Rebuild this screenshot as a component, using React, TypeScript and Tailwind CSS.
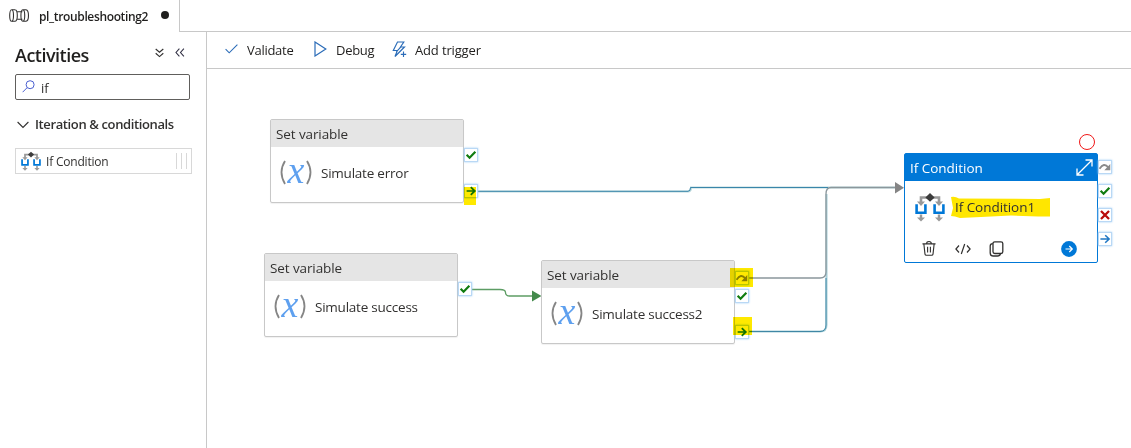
import React from "react";

type PortKind = "check" | "arrow" | "blueArrow" | "skip" | "fail";

function IfIcon({ size }: { size: number }) {
  return (
    <svg width={size} height={size} viewBox="0 0 30 30" className="shrink-0" fill="none">
      <path d="M6 12V5.5H24V12" stroke="#999" strokeWidth="2.6" />
      <path d="M2 9.5h8L6 14zM20 9.5h8L24 14z" fill="#999" />
      <path d="M15 1l4.6 4.4L15 9.8l-4.6-4.4z" fill="#3c3c3c" />
      <path d="M1.6 12.2v8.6h8.800v-8.600M19.600 12.2v8.600h8.800v-8.600" stroke="#0078d7" strokeWidth="2.6" />
      <path d="M6 22.500V27M24 22.500V27" stroke="#999" strokeWidth="2.4" />
      <path d="M2 25.400h8L6 29.600zM20 25.400h8L24 29.600z" fill="#999" />
    </svg>
  );
}

function VariableIcon() {
  return (
    <span className="relative flex h-7 w-[34px] shrink-0 items-center justify-center">
      <svg className="absolute inset-0" width="34" height="28" viewBox="0 0 34 28" fill="none">
        <path d="M6 2Q-1 13 6 25M28 2Q35 13 28 25" stroke="#858585" strokeWidth="1.8" />
      </svg>
      <span className="-mt-[6px] block font-['Liberation_Serif',serif] text-[38px] leading-[44px] tracking-normal text-[#5ea0ef] italic">x</span>
    </span>
  );
}

function Port({ kind, className }: { kind: PortKind; className: string }) {
  return (
    <div className={`absolute size-[14px] border border-[#b9d8f5] bg-white shadow-[0_0_2px_#9fccf5] ${className}`}>
      <svg width="12" height="12" viewBox="0 0 11 11" fill="none" className="block">
        {kind === "check" && <path d="M1.5 5.3L4.2 8L9.5 2.5" stroke="#107c10" strokeWidth="2" />}
        {kind === "arrow" && <path d="M1.5 5.5H9M5.3 2L9 5.5L5.3 9" stroke="#107c10" strokeWidth="1.6" />}
        {kind === "blueArrow" && <path d="M1.3 5.5H9.3M5.7 2L9.3 5.5L5.7 9" stroke="#1f77c4" strokeWidth="1.4" />}
        {kind === "skip" && (
          <>
            <path d="M.5 7.2Q4.3 .8 8.7 6" stroke="#8a8a8a" strokeWidth="1.7" />
            <path d="M10.3 2.8V8.5H4.9z" fill="#8a8a8a" />
          </>
        )}
        {kind === "fail" && <path d="M1.8 1.8L9.2 9.2M9.2 1.8L1.8 9.2" stroke="#b80c0c" strokeWidth="2.1" />}
      </svg>
    </div>
  );
}

function VariableNode({ name, className }: { name: string; className: string }) {
  return (
    <div className={`absolute flex h-[84px] w-[194px] flex-col rounded-[2px] border border-[#c8c8c8] bg-white shadow-[0_1px_1px_rgba(0,0,0,0.06)] ${className}`}>
      <div className="flex h-[27px] shrink-0 items-center bg-[#e5e5e5] px-[5px] pt-[2px] text-[13.5px] tracking-[-0.1px] text-[#323130]">Set variable</div>
      <div className="flex h-[52px] items-center pl-[8px] text-[13.5px] tracking-[-0.23px] text-[#323130]">
        <VariableIcon />
        <span className="ml-[8px]">{name}</span>
      </div>
    </div>
  );
}

function Tab() {
  return (
    <div className="flex h-8 w-[180px] shrink-0 items-center border-r border-[#c8c8c8] pl-[9px]">
      <svg width="21" height="13" viewBox="0 0 21 13" fill="none" stroke="#323130" strokeWidth="1.1" className="-mt-[2px]">
        <ellipse cx="2.6" cy="6.5" rx="1.9" ry="5.8" />
        <path d="M3 .7h3.4M3 12.3h3.4M6.2 .7C9 1 9 12 6.2 12.3M8.4 2.7h5M8.4 10.3h5" />
        <path d="M13.8 .7C11.3 1 11.3 12 13.8 12.3M13.8 .7h3.2M13.8 12.3h3.2M14 .7C16.3 1 16.3 12 14 12.3M17 .7C20.3 1 20.3 12 17 12.3" />
      </svg>
      <span className="ml-[9px] w-[110px] whitespace-nowrap pt-px text-[12px] font-semibold tracking-[-0.36px] text-[#201f1e]">pl_troubleshooting2</span>
      <span className="-mt-[2px] ml-[12px] size-2 rounded-full bg-[#201f1e]" />
    </div>
  );
}

function Sidebar() {
  return (
    <aside className="flex w-[207px] shrink-0 flex-col border-r border-[#c8c8c8] pl-[15px]">
      <div className="flex h-[42px] items-center">
        <h2 className="w-[140px] pt-[4px] text-[18px] font-semibold tracking-[-0.5px] text-[#201f1e]">Activities</h2>
        <svg width="9" height="10" viewBox="0 0 9 10" fill="none" stroke="#323130" strokeWidth="1.15">
          <path d="M.7 1L4.5 4.3L8.3 1M.7 5.3L4.5 8.6L8.3 5.3" />
        </svg>
        <svg className="-mt-px ml-[11px]" width="10" height="9" viewBox="0 0 10 9" fill="none" stroke="#323145" strokeWidth="1.1">
          <path d="M4.4 .6L1 4.5L4.4 8.4M8.9 .6L5.5 4.5L8.9 8.4" />
        </svg>
      </div>
      <div className="flex h-[26px] w-[175px] items-center rounded-[2px] border border-[#605e5c] pl-[6px]">
        <svg width="13" height="13" viewBox="0 0 13 13" fill="none" stroke="#4a5fd0" strokeWidth="1" className="-mt-px">
          <circle cx="8.1" cy="4.7" r="4" />
          <path d="M5.2 7.6L.6 12.2" />
        </svg>
        <span className="ml-[6px] pt-[3px] text-[13px] text-[#323130]">if</span>
      </div>
      <div className="mt-[15px] flex h-5 items-center">
        <svg width="12" height="8" viewBox="0 0 12 8" className="-mt-px ml-[2px]" fill="none" stroke="#323130" strokeWidth="1.1">
          <path d="M.6 1L6 6.5L11.4 1" />
        </svg>
        <span className="ml-[6px] whitespace-nowrap text-[13px] font-semibold tracking-[-0.38px] text-[#323130]">Iteration &amp; conditionals</span>
      </div>
      <div className="mt-[13px] flex h-[26px] w-[177px] items-center border border-[#d8d8d8] pl-[5px]">
        <IfIcon size={20} />
        <span className="ml-[5px] grow pt-px text-[12px] tracking-[-0.2px] text-[#323130]">If Condition</span>
        <span className="mr-[4px] h-4 w-[11px] border-x border-[#d8d8d8]">
          <span className="mx-auto block h-4 w-px bg-[#d8d8d8]" />
        </span>
      </div>
    </aside>
  );
}

function Toolbar() {
  return (
    <div className="flex h-[37px] shrink-0 items-center border-b border-[#c8c8c8] pl-[18px] text-[13px] tracking-[-0.28px] text-[#201f1e]">
      <svg width="13" height="10" viewBox="0 0 13 10" fill="none" stroke="#2b6cb8" strokeWidth="1.1" className="-mt-[3px]">
        <path d="M.6 5.2L4.2 8.8L12.4 .6" />
      </svg>
      <span className="ml-[9px] w-[67px] pt-[2px]">Validate</span>
      <svg width="13" height="16" viewBox="0 0 13 16" fill="none" stroke="#2b6cb8" strokeWidth="1.2" className="-mt-[3px]">
        <path d="M1 1V15L11.8 8z" />
      </svg>
      <span className="ml-[9px] w-[56px] pt-[2px]">Debug</span>
      <svg width="16" height="17" viewBox="0 0 16 17" fill="none" stroke="#2b6cb8" strokeWidth="1.15" className="-mt-[2px]">
        <path d="M5.5 1H11.8L8.5 6H12.5L3 15.5L5.4 9.5H1.3zM8.7 6.2L4.3 10.8M11.5 10.5V16M8.8 13.3H14.2" />
      </svg>
      <span className="ml-[7px] pt-[2px] tracking-[-0.15px]">Add trigger</span>
    </div>
  );
}

function Connections() {
  return (
    <svg className="absolute inset-0" width="924" height="379" viewBox="207 69 924 379" fill="none">
      <path d="M477 191.5H688Q691 191.5 691 187.5H895" stroke="#b9d8dc" strokeWidth="2" />
      <path d="M477 191.3H688Q690.5 191.3 690.5 187.5H828" stroke="#3a86aa" strokeWidth="1" />
      <path d="M748 331.5H820Q826.5 331.5 826.5 325V194" stroke="#a6ced8" strokeWidth="2" />
      <path d="M748 331.5H820Q826 331.5 826 325V278" stroke="#3f87a5" strokeWidth="1" />
      <path d="M748 278H820Q826 278 826 272V194Q826 187.5 831 187.5H896" stroke="#8b979c" strokeWidth="1.3" />
      <path d="M895 182V193.5L904 187.8z" fill="#858585" />
      <path d="M471 289.5H500Q505.5 289.5 505.5 292.5Q505.5 296 510 296H533" stroke="#5d9d64" strokeWidth="1.3" />
      <path d="M532 290.5V301.5L541.5 296z" fill="#438a4b" />
    </svg>
  );
}

function ConditionNode() {
  return (
    <div className="absolute left-[697px] top-[84px] flex h-[110px] w-[194px] flex-col rounded-[2px] border border-[#0078d7] bg-white text-[13.5px]">
      <div className="flex h-[27px] shrink-0 items-center justify-between bg-[#0078d7] pl-[5px] pr-[4px] text-white">
        <span className="pt-[2px] tracking-[-0.02px]">If Condition</span>
        <svg width="17" height="17" viewBox="0 0 17 17" fill="none" stroke="white" strokeWidth="1.3">
          <path d="M1.2 15.8L15.8 1.2M9.5 1H16V7.5M1 9.5V16H7.5" />
        </svg>
      </div>
      <div className="flex h-[52px] items-center pl-[10px] text-[#323130]">
        <IfIcon size={30} />
        <div className="relative ml-[6px] flex h-[22px] w-[100px] items-center pl-[4px] tracking-[-0.05px]">
          <svg className="absolute inset-0" width="100" height="22" viewBox="0 0 100 22">
            <path d="M0 1Q4 0 8 2.5L89 3L99 2V20.5H87L60 19.5L30 21L9 22L4 20.5L0 20L2 12z" fill="#ffe600" />
          </svg>
          <span className="relative">If Condition1</span>
        </div>
      </div>
      <div className="flex h-[30px] items-center pl-[17px]">
        <svg width="14" height="17" viewBox="0 0 15 17" fill="none" stroke="#323130" strokeWidth="1.2" className="mt-[2px]">
          <path d="M.5 3.5H14.5M5 3.3Q5 1 7.5 1Q10 1 10 3.3M2 3.7L3.2 14.5Q3.4 15.8 4.7 15.8H10.3Q11.6 15.8 11.8 14.5L13 3.7M6 6.5V12.8M9 6.5V12.8" />
        </svg>
        <svg className="ml-[19px] mt-[3px]" width="16" height="12" viewBox="0 0 16 12" fill="none" stroke="#323130" strokeWidth="1.2">
          <path d="M4 2.5L.9 6L4 9.5M12 2.5L15.1 6L12 9.5M9.7 1L6.3 11" />
        </svg>
        <svg className="ml-[18px] mt-[3px]" width="15" height="16" viewBox="0 0 15 16" fill="none" stroke="#323130" strokeWidth="1.3">
          <rect x="4" y=".8" width="9.8" height="11.7" rx="1.8" />
          <path d="M3.8 2.7Q1.2 2.9 1.2 5V12Q1.2 15 4.2 15H8.5Q11 15 11.5 12.7" />
        </svg>
        <svg className="ml-[57px] mt-[3px]" width="16" height="16" viewBox="0 0 16 16" fill="none" stroke="white" strokeWidth="1.2">
          <circle cx="8" cy="8" r="7.9" fill="#0078d7" stroke="none" />
          <path d="M4.5 8H11.3M8.3 5L11.3 8L8.3 11" />
        </svg>
      </div>
    </div>
  );
}

function Canvas() {
  return (
    <div className="relative grow overflow-hidden">
      <Connections />
      <VariableNode name="Simulate error" className="left-[63px] top-[50px]" />
      <VariableNode name="Simulate success" className="left-[57px] top-[184px]" />
      <VariableNode name="Simulate success2" className="left-[334px] top-[191px]" />
      <ConditionNode />
      <Port kind="check" className="left-[257px] top-[79px]" />
      <Port kind="arrow" className="left-[257px] top-[115px]" />
      <Port kind="check" className="left-[251px] top-[213px]" />
      <Port kind="skip" className="left-[528px] top-[202px]" />
      <Port kind="check" className="left-[528px] top-[220px]" />
      <Port kind="arrow" className="left-[528px] top-[256px]" />
      <Port kind="skip" className="left-[891px] top-[91px]" />
      <Port kind="check" className="left-[891px] top-[115px]" />
      <Port kind="fail" className="left-[891px] top-[139px]" />
      <Port kind="blueArrow" className="left-[891px] top-[163px]" />
      <span className="absolute left-[257px] top-[118px] h-[18px] w-[12px] bg-[#ffe900] mix-blend-multiply" />
      <span className="absolute left-[523px] top-[199px] h-[19px] w-[23px] bg-[#ffe900] mix-blend-multiply" />
      <span className="absolute left-[526px] top-[248px] h-[18px] w-[19px] bg-[#ffe900] mix-blend-multiply" />
      <span className="absolute left-[872px] top-[65px] size-4 rounded-full border border-[#f01818]" />
    </div>
  );
}

export default function App() {
  return (
    <div className="flex h-[448px] w-[1131px] flex-col overflow-hidden bg-white font-['Open_Sans',sans-serif]">
      <div className="flex h-8 shrink-0">
        <Tab />
        <div className="grow border-b border-[#c8c8c8]" />
      </div>
      <div className="flex min-h-0 grow">
        <Sidebar />
        <main className="flex min-w-0 grow flex-col">
          <Toolbar />
          <Canvas />
        </main>
      </div>
    </div>
  );
}
